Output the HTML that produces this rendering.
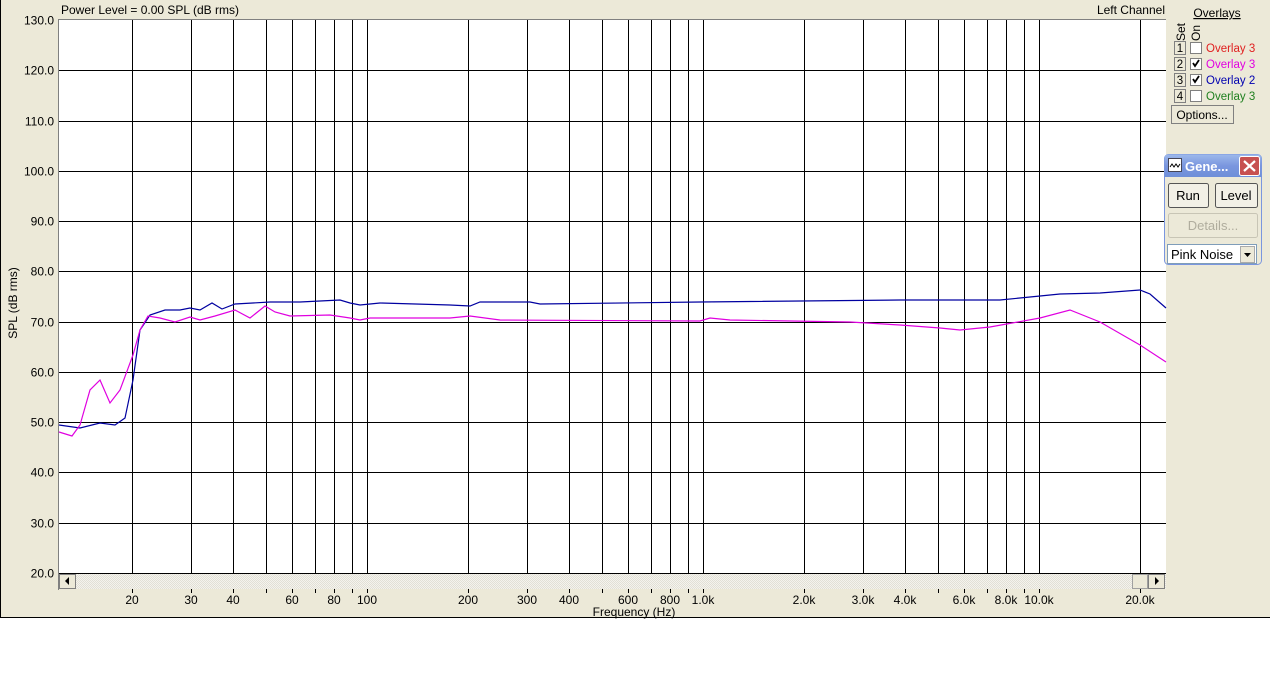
<!DOCTYPE html>
<html><head><meta charset="utf-8"><style>
body{margin:0;width:1270px;height:669px;background:#fff;overflow:hidden;font-family:"Liberation Sans",sans-serif;}
</style></head><body>
<svg width="1270" height="669" xmlns="http://www.w3.org/2000/svg" font-family="Liberation Sans, sans-serif" font-size="12">
<defs>
<pattern id="chk" width="2" height="2" patternUnits="userSpaceOnUse"><rect width="2" height="2" fill="#f4f3ee"/><rect width="1" height="1" fill="#e2e0d6"/><rect x="1" y="1" width="1" height="1" fill="#e2e0d6"/></pattern>
<linearGradient id="tb" x1="0" y1="0" x2="0" y2="1"><stop offset="0" stop-color="#9db9eb"/><stop offset="0.5" stop-color="#7a96df"/><stop offset="1" stop-color="#6f8fd8"/></linearGradient>
</defs>
<rect x="0" y="0" width="1270" height="618" fill="#ECE9D8"/>
<line x1="0" y1="617.5" x2="1270" y2="617.5" stroke="#000"/>
<line x1="0.5" y1="0" x2="0.5" y2="618" stroke="#000"/>
<rect x="59" y="20" width="1107" height="553" fill="#fff"/>
<line x1="58.5" y1="19" x2="58.5" y2="590" stroke="#808080"/>
<line x1="58" y1="19.5" x2="1166" y2="19.5" stroke="#808080"/>
<text x="61" y="14">Power Level = 0.00 SPL (dB rms)</text>
<text x="1165" y="14" text-anchor="end">Left Channel</text>
<g id="grid" stroke="#000" stroke-width="1"></g>
<g id="ylab" text-anchor="end"></g>
<g id="xlab" text-anchor="middle"></g>
<text x="17" y="303" transform="rotate(-90 17 303)" text-anchor="middle">SPL (dB rms)</text>
<text x="634" y="616" text-anchor="middle">Frequency (Hz)</text>
<polyline fill="none" stroke="#0000a0" stroke-width="1.2" points="59,425 80,428 100,423 115,425 125,418 133,380 140,330 150,315 165,310 180,310 190,308 200,310 212,303 222,309 235,304 270,302 300,302 340,300 350,303 360,305 380,303 450,305 470,306 480,302 530,302 540,304 700,302 900,300 1000,300 1030,297 1060,294 1100,293 1140,290 1150,294 1166,308"/>
<polyline fill="none" stroke="#e000e0" stroke-width="1.2" points="59,432 72,436 80,425 90,390 100,380 110,403 120,390 133,355 140,330 148,316 160,318 175,322 190,317 200,320 215,316 235,310 250,318 265,306 275,312 290,316 330,315 350,318 360,320 370,318 450,318 470,316 500,320 700,321 710,318 730,320 850,322 900,325 940,328 960,330 990,327 1040,318 1070,310 1100,322 1140,345 1166,362"/>
<rect x="59" y="573" width="1107" height="16" fill="url(#chk)"/>
<line x1="59" y1="573.5" x2="1166" y2="573.5" stroke="#000"/>
<rect x="59.5" y="574.5" width="16" height="14" fill="#ECE9D8" stroke="#808080"/>
<path d="M65 581 L69 577 L69 585 Z" fill="#000"/>
<rect x="1132.5" y="574.5" width="15" height="14" fill="#ECE9D8" stroke="#a0a0a0"/>
<rect x="1148.5" y="574.5" width="16" height="14" fill="#ECE9D8" stroke="#808080"/>
<path d="M1159 581 L1155 577 L1155 585 Z" fill="#000"/>
<!-- overlays panel -->
<text x="1217" y="17" text-anchor="middle" text-decoration="underline">Overlays</text>
<text transform="translate(1185 41) rotate(-90)">Set</text>
<text transform="translate(1200 41) rotate(-90)">On</text>
<g font-size="11.5">
<rect x="1174.5" y="41.5" width="11" height="13" fill="#ECE9D8" stroke="#808080"/><text x="1180" y="52" text-anchor="middle">1</text>
<rect x="1190.5" y="42.5" width="11" height="11" fill="#fff" stroke="#808080"/><text x="1206" y="52" fill="#e02020">Overlay 3</text>
<rect x="1174.5" y="57.5" width="11" height="13" fill="#ECE9D8" stroke="#808080"/><text x="1180" y="68" text-anchor="middle">2</text>
<rect x="1190.5" y="58.5" width="11" height="11" fill="#fff" stroke="#808080"/><path d="M1193 63 L1195 66 L1199 60" stroke="#000" stroke-width="1.8" fill="none"/><text x="1206" y="68" fill="#e000e0">Overlay 3</text>
<rect x="1174.5" y="73.5" width="11" height="13" fill="#ECE9D8" stroke="#808080"/><text x="1180" y="84" text-anchor="middle">3</text>
<rect x="1190.5" y="74.5" width="11" height="11" fill="#fff" stroke="#808080"/><path d="M1193 79 L1195 82 L1199 76" stroke="#000" stroke-width="1.8" fill="none"/><text x="1206" y="84" fill="#0000b0">Overlay 2</text>
<rect x="1174.5" y="89.5" width="11" height="13" fill="#ECE9D8" stroke="#808080"/><text x="1180" y="100" text-anchor="middle">4</text>
<rect x="1190.5" y="90.5" width="11" height="11" fill="#fff" stroke="#808080"/><text x="1206" y="100" fill="#208020">Overlay 3</text>
</g>
<rect x="1171.5" y="105.5" width="62" height="18" fill="#ECE9D8" stroke="#808080"/><text x="1202" y="119" text-anchor="middle">Options...</text>
<!-- generator -->
<rect x="1164.5" y="154.5" width="97" height="110" rx="4" fill="#ECE9D8" stroke="#7a96df"/>
<path d="M1164.5 177 V158.5 Q1164.5 154.5 1168.5 154.5 H1257.5 Q1261.5 154.5 1261.5 158.5 V177 Z" fill="url(#tb)"/>
<rect x="1168.5" y="158.5" width="13" height="13" fill="#fff" stroke="#445"/>
<path d="M1170 167 l2-3 l2 3 l2-3 l2 3 l2-3" stroke="#000" fill="none"/>
<text x="1185" y="171" fill="#fff" font-weight="bold" font-size="13">Gene...</text>
<rect x="1239.5" y="156.5" width="20" height="19" rx="2" fill="#c75050" stroke="#fff"/>
<path d="M1244 161 L1255 171 M1255 161 L1244 171" stroke="#fff" stroke-width="2.2"/>
<rect x="1168.5" y="183.5" width="40" height="24" rx="2" fill="#f2f0e6" stroke="#555"/><text x="1188" y="200" text-anchor="middle" font-size="13">Run</text>
<rect x="1215.5" y="183.5" width="42" height="24" rx="2" fill="#f2f0e6" stroke="#555"/><text x="1236" y="200" text-anchor="middle" font-size="13">Level</text>
<rect x="1168.5" y="213.5" width="89" height="24" rx="2" fill="#ECE9D8" stroke="#c8c5b5"/><text x="1213" y="230" text-anchor="middle" font-size="13" fill="#b0ad9e">Details...</text>
<rect x="1167.5" y="244.5" width="89" height="19" fill="#fff" stroke="#7f9db9"/><text x="1171" y="259" font-size="13">Pink Noise</text>
<rect x="1240.5" y="246.5" width="14" height="16" fill="#ECE9D8" stroke="#aaa"/><path d="M1244 253 L1251 253 L1247.5 257 Z" fill="#000"/>
</svg>
<script>
var ns="http://www.w3.org/2000/svg",g=document.getElementById('grid'),yl=document.getElementById('ylab'),xl=document.getElementById('xlab');
function el(p,t,a,txt){var e=document.createElementNS(ns,t);for(var k in a)e.setAttribute(k,a[k]);if(txt)e.textContent=txt;p.appendChild(e);}
for(var i=0;i<=11;i++){var y=Math.round(20+i*553/11)+0.5;if(i>0&&i<11)el(g,'line',{x1:59,x2:1166,y1:y,y2:y});el(yl,'text',{x:54,y:y+4},(130-i*10).toFixed(1));}
function X(f){return 367+336*Math.log10(f/100);}
var fs=[];[10,100,1000,10000].forEach(function(d){for(var m=1;m<=9;m++){var f=d*m;if(f>=20&&f<=20000)fs.push(f);}});
fs.forEach(function(f){var x=Math.round(X(f))+0.5;el(g,'line',{x1:x,x2:x,y1:20,y2:573});el(g,'line',{x1:x,x2:x,y1:589,y2:593});});
var labs={20:'20',30:'30',40:'40',60:'60',80:'80',100:'100',200:'200',300:'300',400:'400',600:'600',800:'800',1000:'1.0k',2000:'2.0k',3000:'3.0k',4000:'4.0k',6000:'6.0k',8000:'8.0k',10000:'10.0k',20000:'20.0k'};
for(var f in labs)el(xl,'text',{x:Math.round(X(+f)),y:604},labs[f]);
</script>
</body></html>
